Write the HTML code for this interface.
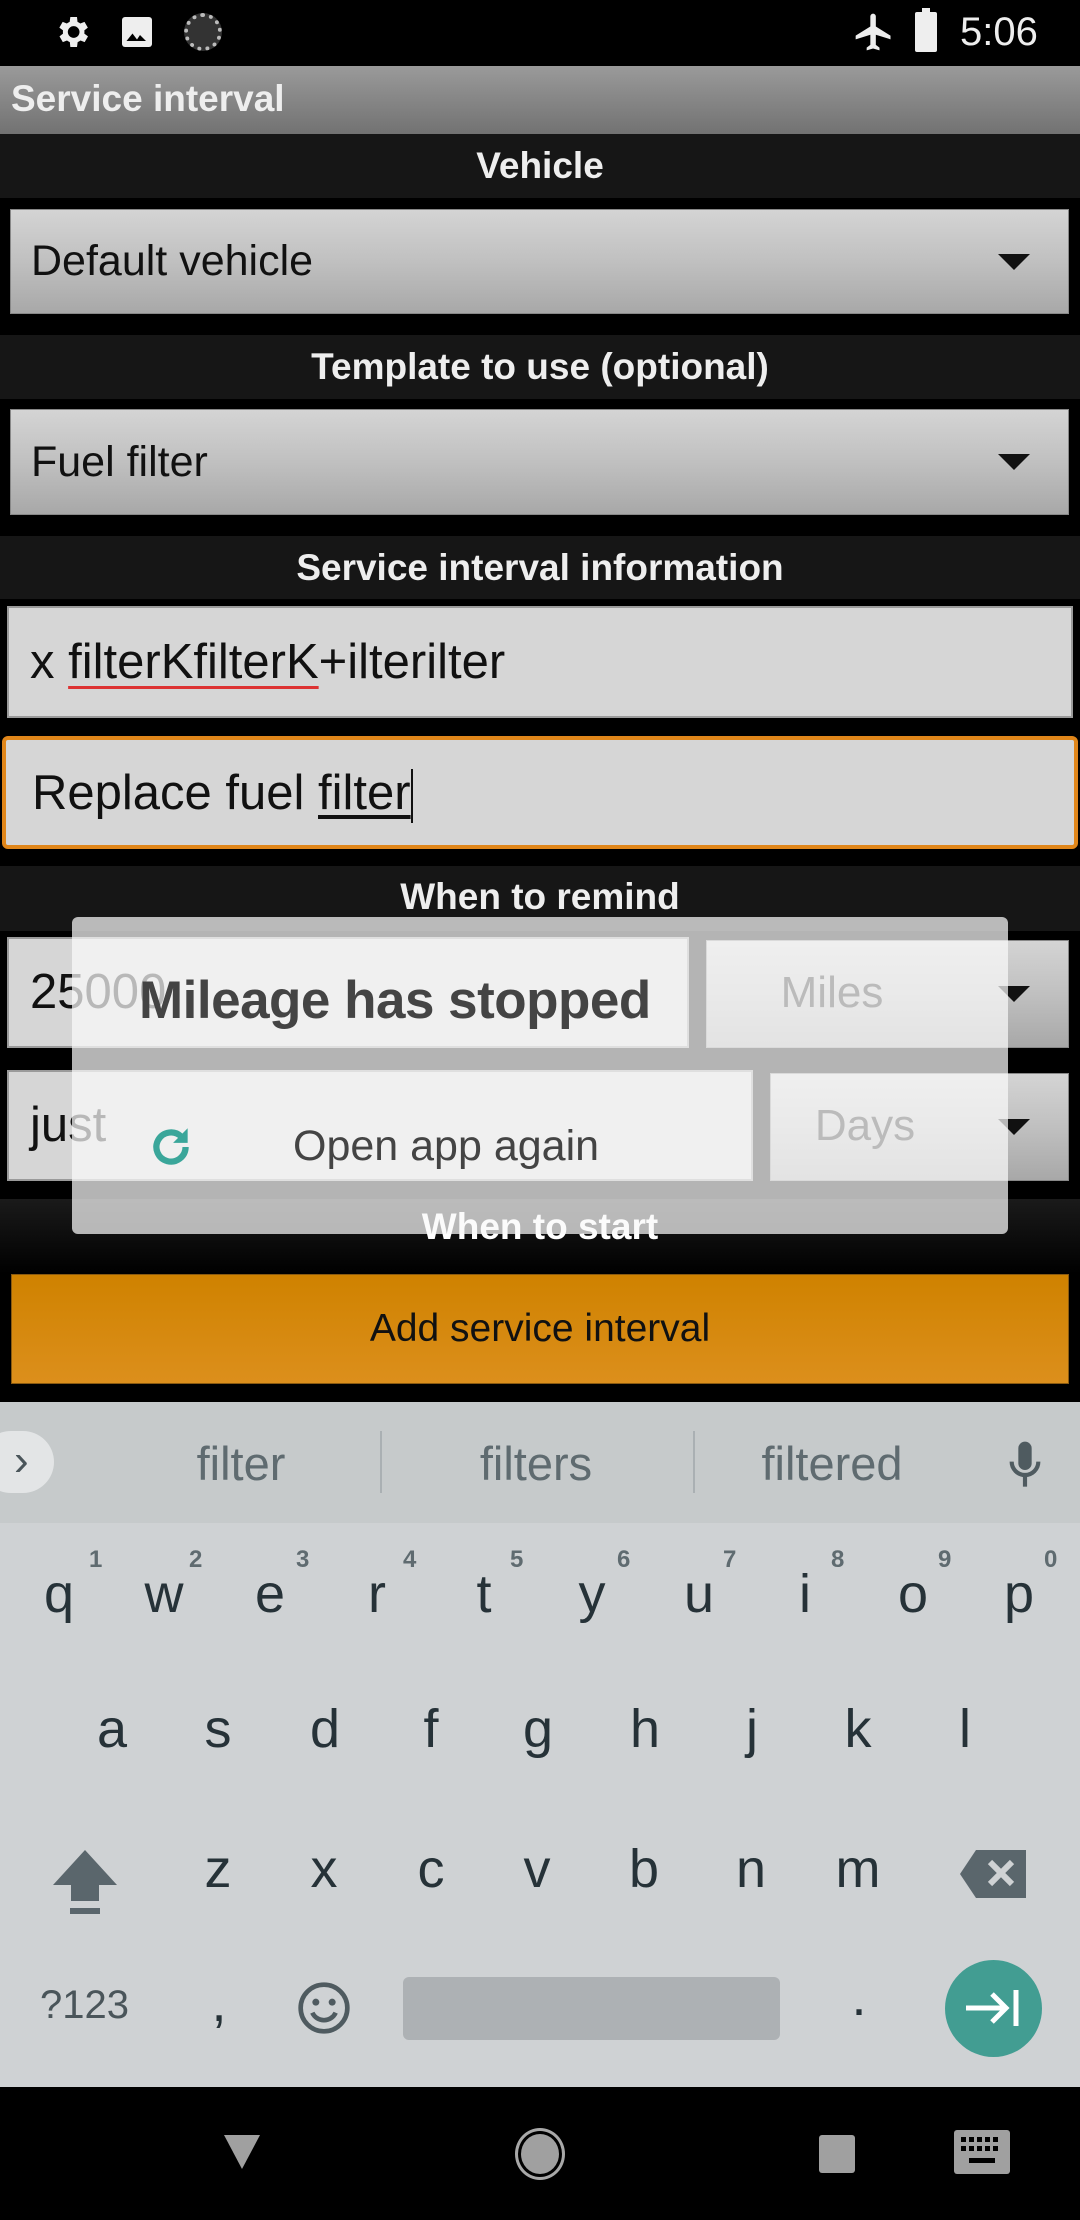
<!DOCTYPE html>
<html><head><meta charset="utf-8"><style>
*{margin:0;padding:0;box-sizing:border-box}
body{width:1080px;height:2220px;background:#000;font-family:"Liberation Sans",sans-serif;position:relative;overflow:hidden}
.a{position:absolute}
.hdr{position:absolute;left:0;width:1080px;background:#161616;color:#eee;font-weight:bold;font-size:37px;text-align:center}
.sp{position:absolute;background:linear-gradient(#d4d4d4,#c0c0c0 50%,#a8a8a8);border:1px solid #888;color:#111;font-size:43px}
.arr{position:absolute;right:38px;top:50%;margin-top:-8px;width:0;height:0;border-left:16px solid transparent;border-right:16px solid transparent;border-top:16px solid #111}
.ed{position:absolute;background:#d6d6d6;border:2px solid #9a9a9a;color:#111;font-size:49px}
.k{position:absolute;width:100px;text-align:center;font-size:54px;color:#263238}
.n{position:absolute;font-size:24px;color:#5f6b70;font-weight:bold}
.sg{position:absolute;font-size:47px;color:#5f6b70;text-align:center;width:260px}
</style></head><body>
<svg class="a" style="left:50px;top:12px" width="44" height="40" viewBox="0 0 24 24"><path fill="#eee" d="M19.4 13a7.5 7.5 0 000-2l2.1-1.6-2-3.5-2.5 1a7 7 0 00-1.7-1L15 3h-4l-.4 2.9a7 7 0 00-1.7 1l-2.5-1-2 3.5L6.6 11a7.5 7.5 0 000 2l-2.1 1.6 2 3.5 2.5-1a7 7 0 001.7 1L11 21h4l.4-2.9a7 7 0 001.7-1l2.5 1 2-3.5zM13 15.5a3.5 3.5 0 110-7 3.5 3.5 0 010 7z"/></svg>
<svg class="a" style="left:119px;top:14px" width="36" height="36" viewBox="0 0 24 24"><rect x="2" y="2" width="20" height="20" rx="2" fill="#eee"/><path d="M5 18l4-5 3 4 2-3 4 4z" fill="#000"/></svg>
<div class="a" style="left:184px;top:13px;width:38px;height:38px;border-radius:50%;border:4px dotted #bbb;background:#333"></div>
<svg class="a" style="left:852px;top:10px" width="44" height="44" viewBox="0 0 24 24"><path fill="#eee" d="M21 16v-2l-8-5V3.5a1.5 1.5 0 00-3 0V9l-8 5v2l8-2.5V19l-2 1.5V22l3.5-1 3.5 1v-1.5L13 19v-5.5z"/></svg>
<div class="a" style="left:915px;top:12px;width:22px;height:40px;background:#eee;border-radius:2px"></div>
<div class="a" style="left:922px;top:8px;width:8px;height:5px;background:#eee"></div>
<div class="a" style="left:960px;top:10px;color:#eee;font-size:40px">5:06</div>
<div class="a" style="left:0;top:66px;width:1080px;height:68px;background:linear-gradient(#9a9a9a,#727272)"></div>
<div class="a" style="left:11px;top:78px;color:#eee;font-size:37px;font-weight:bold">Service interval</div>
<div class="hdr" style="top:134px;height:64px;line-height:64px">Vehicle</div>
<div class="sp" style="left:10px;top:209px;width:1059px;height:105px;line-height:103px;padding-left:20px">Default vehicle<div class="arr"></div></div>
<div class="hdr" style="top:335px;height:64px;line-height:64px">Template to use (optional)</div>
<div class="sp" style="left:10px;top:409px;width:1059px;height:106px;line-height:104px;padding-left:20px">Fuel filter<div class="arr"></div></div>
<div class="hdr" style="top:536px;height:63px;line-height:63px">Service interval information</div>
<div class="ed" style="left:7px;top:606px;width:1066px;height:112px;line-height:108px;padding-left:21px">x <span style="text-decoration:underline;text-decoration-color:#d33;text-underline-offset:8px;text-decoration-thickness:3px">filterKfilterK</span>+ilterilter</div>
<div class="ed" style="left:2px;top:736px;width:1076px;height:113px;line-height:107px;padding-left:26px;border:4px solid #e0861a;border-radius:6px">Replace fuel <span style="text-decoration:underline;text-underline-offset:6px">filter</span><span style="display:inline-block;width:2px;height:54px;background:#111;vertical-align:middle"></span></div>
<div class="hdr" style="top:866px;height:65px;line-height:62px">When to remind</div>
<div class="ed" style="left:7px;top:937px;width:682px;height:111px;line-height:107px;padding-left:21px">25000</div>
<div class="sp" style="left:706px;top:940px;width:363px;height:108px"><div class="arr"></div></div>
<div class="ed" style="left:7px;top:1070px;width:746px;height:111px;line-height:107px;padding-left:21px">just</div>
<div class="sp" style="left:770px;top:1073px;width:299px;height:108px"><div class="arr"></div></div>
<div class="a" style="left:0;top:1199px;width:1080px;height:75px;background:linear-gradient(#1a1a1a,#000)"></div>
<div class="a" style="left:0;top:1206px;width:1080px;text-align:center;color:#fff;font-weight:bold;font-size:37px">When to start</div>
<div class="a" style="left:72px;top:917px;width:936px;height:317px;background:rgba(250,250,250,0.72);border-radius:6px"></div>
<div class="a" style="left:139px;top:970px;font-size:53px;color:#444;font-weight:bold;letter-spacing:-0.5px">Mileage has stopped</div>
<div class="a" style="left:707px;top:968px;width:250px;text-align:center;font-size:44px;color:#bbb">Miles</div>
<div class="a" style="left:770px;top:1101px;width:190px;text-align:center;font-size:44px;color:#bbb">Days</div>
<svg class="a" style="left:146px;top:1122px" width="50" height="50" viewBox="0 0 24 24"><path d="M19 12a7 7 0 11-2.05-4.95" fill="none" stroke="#3aa69a" stroke-width="3"/><path d="M20 3v7h-7z" fill="#3aa69a"/></svg>
<div class="a" style="left:293px;top:1122px;font-size:43px;color:#444">Open app again</div>
<div class="a" style="left:11px;top:1274px;width:1058px;height:110px;background:linear-gradient(#cf8200,#dc8f1c);border:1px solid #8a5a10;text-align:center;line-height:108px;font-size:39px;color:#111">Add service interval</div>
<div class="a" style="left:0;top:1402px;width:1080px;height:685px;background:#cfd2d4"></div>
<div class="a" style="left:0;top:1402px;width:1080px;height:121px;background:#c6cacb"></div>
<div class="a" style="left:-20px;top:1431px;width:74px;height:62px;border-radius:31px;background:#e3e5e6"></div>
<div class="a" style="left:14px;top:1436px;font-size:44px;color:#4a555a">›</div>
<div class="sg" style="left:111px;top:1436px">filter</div>
<div class="sg" style="left:406px;top:1436px">filters</div>
<div class="sg" style="left:702px;top:1436px">filtered</div>
<div class="a" style="left:380px;top:1431px;width:2px;height:62px;background:#aab0b3"></div>
<div class="a" style="left:693px;top:1431px;width:2px;height:62px;background:#aab0b3"></div>
<svg class="a" style="left:1005px;top:1440px" width="40" height="50" viewBox="0 0 24 30"><rect x="8" y="1" width="8" height="17" rx="4" fill="#4f5b60"/><path d="M4 13a8 8 0 0016 0" fill="none" stroke="#4f5b60" stroke-width="2.5"/><path d="M12 21v7" stroke="#4f5b60" stroke-width="2.5"/></svg>
<div class="k" style="left:9px;top:1563px">q</div><div class="k" style="left:114px;top:1563px">w</div><div class="k" style="left:220px;top:1563px">e</div><div class="k" style="left:327px;top:1563px">r</div><div class="k" style="left:434px;top:1563px">t</div><div class="k" style="left:542px;top:1563px">y</div><div class="k" style="left:649px;top:1563px">u</div><div class="k" style="left:755px;top:1563px">i</div><div class="k" style="left:863px;top:1563px">o</div><div class="k" style="left:969px;top:1563px">p</div>
<div class="n" style="left:89px;top:1546px">1</div><div class="n" style="left:189px;top:1546px">2</div><div class="n" style="left:296px;top:1546px">3</div><div class="n" style="left:403px;top:1546px">4</div><div class="n" style="left:510px;top:1546px">5</div><div class="n" style="left:617px;top:1546px">6</div><div class="n" style="left:723px;top:1546px">7</div><div class="n" style="left:831px;top:1546px">8</div><div class="n" style="left:938px;top:1546px">9</div><div class="n" style="left:1044px;top:1546px">0</div>
<div class="k" style="left:62px;top:1698px">a</div><div class="k" style="left:168px;top:1698px">s</div><div class="k" style="left:275px;top:1698px">d</div><div class="k" style="left:381px;top:1698px">f</div><div class="k" style="left:488px;top:1698px">g</div><div class="k" style="left:595px;top:1698px">h</div><div class="k" style="left:702px;top:1698px">j</div><div class="k" style="left:808px;top:1698px">k</div><div class="k" style="left:915px;top:1698px">l</div>
<svg class="a" style="left:52px;top:1845px" width="66" height="72" viewBox="0 0 66 72"><path d="M33 5L1 40h18v16h28V40h18z" fill="#5a666c"/><rect x="18" y="63" width="30" height="6" fill="#5a666c"/></svg>
<div class="k" style="left:168px;top:1838px">z</div><div class="k" style="left:274px;top:1838px">x</div><div class="k" style="left:381px;top:1838px">c</div><div class="k" style="left:487px;top:1838px">v</div><div class="k" style="left:594px;top:1838px">b</div><div class="k" style="left:701px;top:1838px">n</div><div class="k" style="left:808px;top:1838px">m</div>
<svg class="a" style="left:960px;top:1850px" width="68" height="48" viewBox="0 0 68 48"><path d="M16 0h50v48H16L0 24z" fill="#5a666c"/><path d="M30 12l22 22M52 12L30 34" stroke="#cfd2d4" stroke-width="6"/></svg>
<div class="a" style="left:40px;top:1983px;font-size:40px;color:#4a555a">?123</div>
<div class="k" style="left:169px;top:1972px">,</div>
<svg class="a" style="left:296px;top:1980px" width="56" height="56" viewBox="0 0 24 24"><circle cx="12" cy="12" r="10" fill="none" stroke="#4f5b60" stroke-width="2"/><circle cx="8.5" cy="9.5" r="1.5" fill="#4f5b60"/><circle cx="15.5" cy="9.5" r="1.5" fill="#4f5b60"/><path d="M7 14a5.5 5.5 0 0010 0" fill="none" stroke="#4f5b60" stroke-width="2"/></svg>
<div class="a" style="left:403px;top:1977px;width:377px;height:63px;border-radius:6px;background:#adb1b4"></div>
<div class="k" style="left:809px;top:1966px">.</div>
<div class="a" style="left:945px;top:1960px;width:97px;height:97px;border-radius:50%;background:#429d92"></div>
<svg class="a" style="left:962px;top:1982px" width="64" height="52" viewBox="0 0 64 52"><path d="M4 26h40M30 12l14 14-14 14" fill="none" stroke="#fff" stroke-width="5"/><path d="M54 8v36" stroke="#fff" stroke-width="5"/></svg>
<svg class="a" style="left:222px;top:2133px" width="40" height="38" viewBox="0 0 40 38"><path d="M2 2h36L20 36z" fill="#a0a0a0"/></svg>
<div class="a" style="left:515px;top:2128px;width:50px;height:52px;border-radius:50%;border:3px solid #a8a8a8;padding:3px"><div style="width:100%;height:100%;border-radius:50%;background:#a0a0a0"></div></div>
<div class="a" style="left:819px;top:2135px;width:36px;height:38px;border-radius:3px;background:#a0a0a0"></div>
<svg class="a" style="left:954px;top:2130px" width="56" height="44" viewBox="0 0 56 44"><rect width="56" height="44" rx="3" fill="#a0a0a0"/><g fill="#000"><rect x="7" y="7" width="5" height="5"/><rect x="15" y="7" width="5" height="5"/><rect x="23" y="7" width="5" height="5"/><rect x="31" y="7" width="5" height="5"/><rect x="39" y="7" width="5" height="5"/><rect x="7" y="16" width="5" height="5"/><rect x="15" y="16" width="5" height="5"/><rect x="23" y="16" width="5" height="5"/><rect x="31" y="16" width="5" height="5"/><rect x="39" y="16" width="5" height="5"/><rect x="15" y="28" width="26" height="5"/></g></svg>
</body></html>
